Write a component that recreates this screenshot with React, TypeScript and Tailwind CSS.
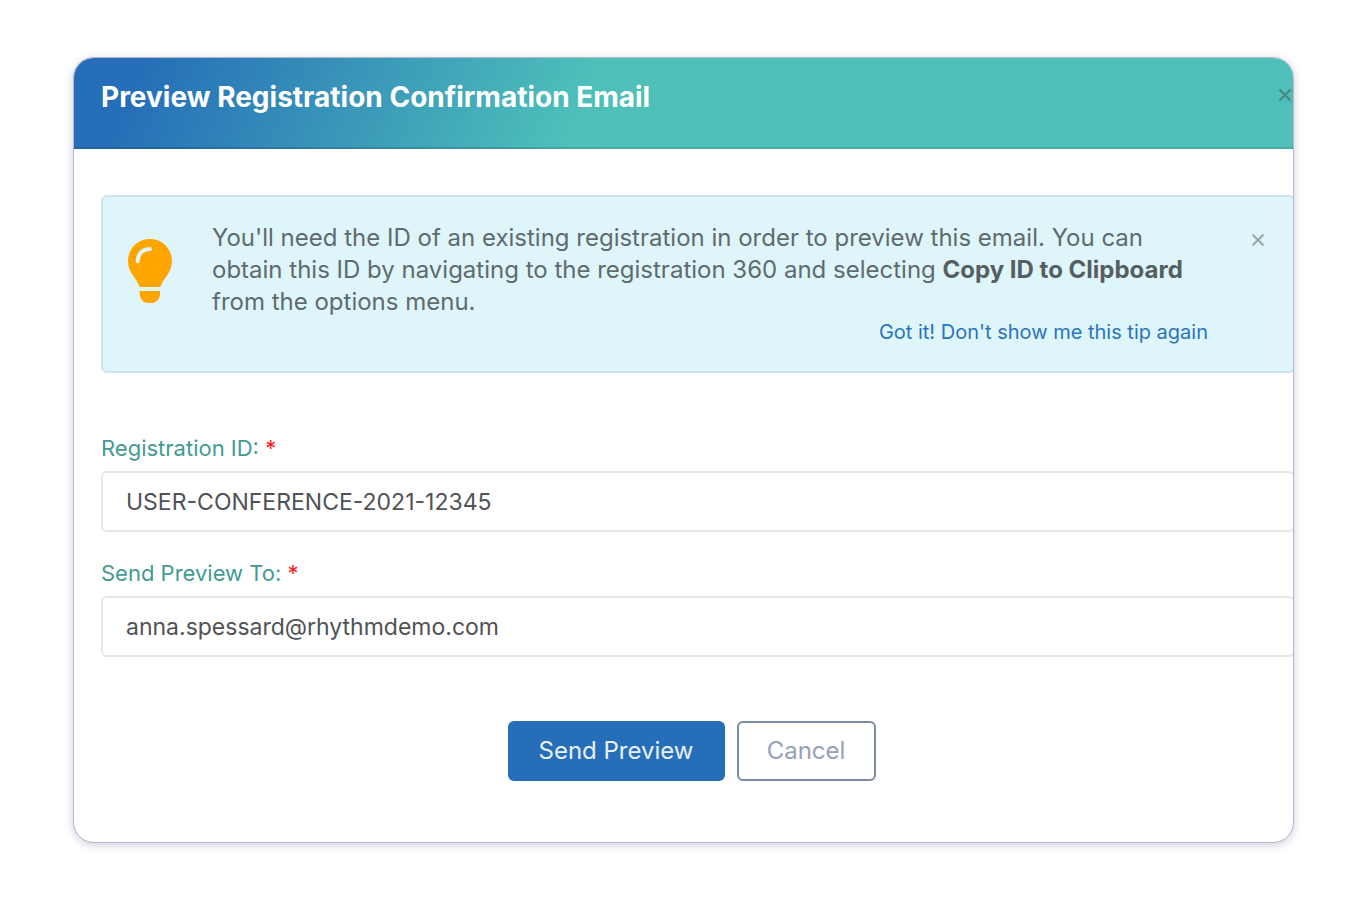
import React, { FC, useState } from "react";

const CloseIcon: FC = () => (
  <svg className="h-3 w-3" viewBox="0 0 12 12" fill="none" stroke="currentColor" strokeWidth="2">
    <path d="M0.5 0.5L11.5 11.5M11.5 0.5L0.5 11.5" />
  </svg>
);

const BulbIcon: FC = () => (
  <svg className="h-16 w-11 shrink-0" viewBox="0 0 132 192" aria-hidden="true">
    <path
      fill="#ffa500"
      d="M66 0C29 0 0 29 0 66c0 17 6 32 16 45c8 10 15 23 19 33h62c4-10 11-23 19-33c10-13 16-28 16-45C132 29 103 0 66 0z"
    />
    <path
      fill="none"
      stroke="#def5f9"
      strokeWidth="12"
      strokeLinecap="round"
      d="M29 67C29 45 44 30 66 30"
    />
    <path
      fill="#ffa500"
      d="M35 156h61v7c0 14-8 29-24 29H59c-16 0-24-15-24-29z"
    />
  </svg>
);

const Field: FC<{
  id: string;
  label: string;
  type: string;
  value: string;
  onChange: (value: string) => void;
}> = ({ id, label, type, value, onChange }) => (
  <div>
    <label htmlFor={id} className="block text-[22px] leading-8 text-[#429b92]">
      {label} <span className="text-[#ff1a1a]">*</span>
    </label>
    <input
      id={id}
      type={type}
      value={value}
      onChange={(e) => onChange(e.target.value)}
      className="mt-[7px] block h-[61px] w-full rounded-md border-2 border-[#e6e6e6] bg-white px-[23px] text-[23px] text-[#4f5256] outline-none"
    />
  </div>
);

const App: FC = () => {
  const [registrationId, setRegistrationId] = useState(
    "USER-CONFERENCE-2021-12345"
  );
  const [email, setEmail] = useState("anna.spessard@rhythmdemo.com");
  const [isTipShown, changeTipShown] = useState(true);

  return (
    <main className="min-h-screen bg-white py-[57px] pr-18 pl-[73px] font-['Inter',sans-serif]">
      <section
        role="dialog"
        aria-labelledby="dialog-title"
        className="overflow-hidden rounded-[21px] border border-[#b6b8cb] bg-white shadow-[0_2px_8px_rgba(60,60,120,0.25)]"
      >
        <header className="flex h-[91px] items-start justify-between border-b-2 border-black/10 bg-[linear-gradient(114deg,#266fb8_6%,#4ec0b9_42%)] pt-[19px] pl-[27px]">
          <h1
            id="dialog-title"
            className="text-[28px] leading-10 font-bold text-white"
          >
            Preview Registration Confirmation Email
          </h1>
          <button
            type="button"
            aria-label="Close"
            className="mt-3 mr-0.5 text-[#4a8581]"
          >
            <CloseIcon />
          </button>
        </header>

        <div className="-mr-0.5 pt-[46px] pb-[61px] pl-[27px]">
          {isTipShown && (
            <div className="flex h-[178px] rounded-md border-2 border-[#cde5e8] bg-[#def5f9] pr-[29px] pl-[25px]">
              <div className="pt-[42px]">
                <BulbIcon />
              </div>
              <div className="ml-10 flex-1 pt-[25px]">
                <p className="text-[24px] leading-8 text-[#5f6b6e]">
                  You'll need the ID of an existing registration in order to
                  preview this email. You can obtain this ID by navigating to
                  the registration 360 and selecting{" "}
                  <strong className="font-bold text-[#555f61]">
                    Copy ID to Clipboard
                  </strong>{" "}
                  from the options menu.
                </p>
                <div className="text-right">
                  <button
                    type="button"
                    onClick={() => changeTipShown(false)}
                    className="text-[20px] leading-7 text-[#2b74bd]"
                  >
                    Got it! Don't show me this tip again
                  </button>
                </div>
              </div>
              <button
                type="button"
                aria-label="Dismiss tip"
                onClick={() => changeTipShown(false)}
                className="mt-[37px] ml-11 self-start text-[#98a8aa]"
              >
                <CloseIcon />
              </button>
            </div>
          )}

          <form className="pt-[59px]" onSubmit={(e) => e.preventDefault()}>
            <div className="flex flex-col gap-[25px]">
              <Field
                id="registration-id"
                label="Registration ID:"
                type="text"
                value={registrationId}
                onChange={setRegistrationId}
              />
              <Field
                id="send-preview-to"
                label="Send Preview To:"
                type="email"
                value={email}
                onChange={setEmail}
              />
            </div>

            <div className="mt-16 flex justify-center gap-3 pr-[13px]">
              <button
                type="submit"
                className="h-[60px] w-[217px] rounded-md bg-[#266fb8] text-[24px] text-[#e9f1f8]"
              >
                Send Preview
              </button>
              <button
                type="button"
                className="h-[60px] w-[139px] rounded-md border-2 border-[#7b8ba5] bg-white text-[24px] text-[#95a2b6]"
              >
                Cancel
              </button>
            </div>
          </form>
        </div>
      </section>
    </main>
  );
};

export default App;
